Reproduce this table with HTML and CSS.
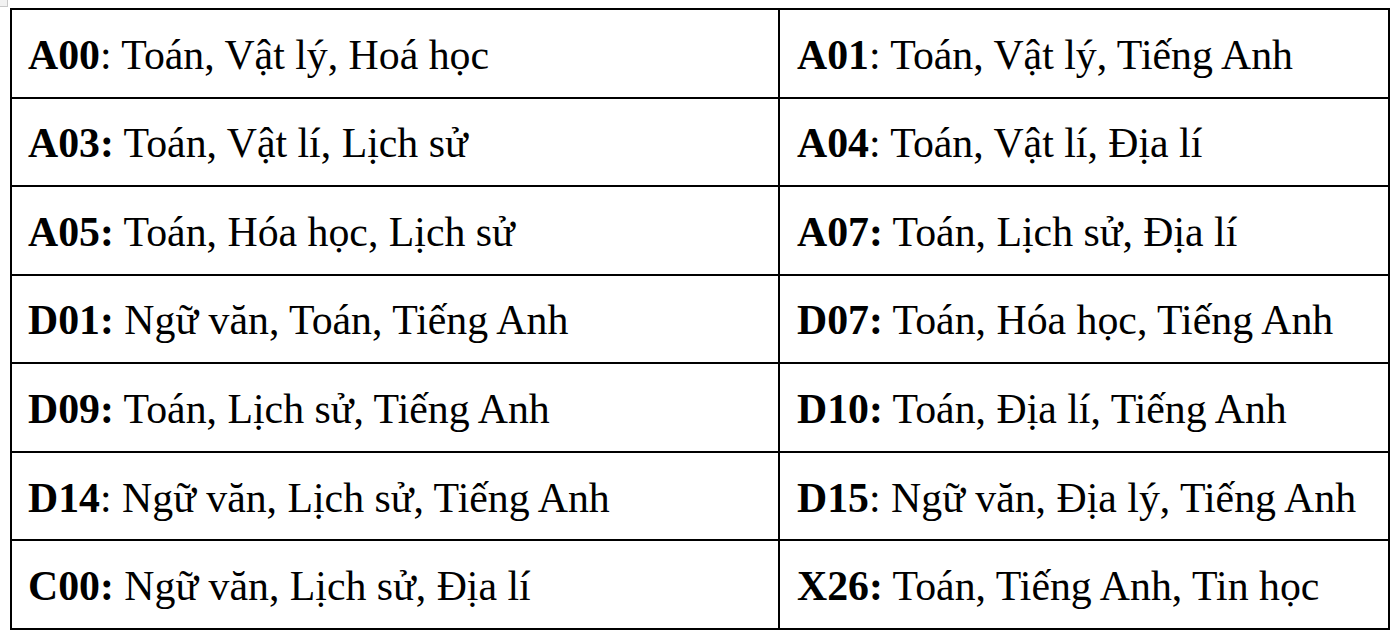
FILE: index.html
```html
<!DOCTYPE html>
<html lang="vi">
<head>
<meta charset="utf-8">
<title>Tổ hợp môn</title>
<link rel="stylesheet" href="styles.css">
</head>
<body>
<div class="corner-mark"></div>
<table class="combos">
  <tr>
    <td class="c1"><b>A00</b>: Toán, Vật lý, Hoá học</td>
    <td class="c2"><b>A01</b>: Toán, Vật lý, Tiếng Anh</td>
  </tr>
  <tr>
    <td class="c1"><b>A03:</b> Toán, Vật lí, Lịch sử</td>
    <td class="c2"><b>A04</b>: Toán, Vật lí, Địa lí</td>
  </tr>
  <tr>
    <td class="c1"><b>A05:</b> Toán, Hóa học, Lịch sử</td>
    <td class="c2"><b>A07:</b> Toán, Lịch sử, Địa lí</td>
  </tr>
  <tr>
    <td class="c1"><b>D01:</b> Ngữ văn, Toán, Tiếng Anh</td>
    <td class="c2"><b>D07:</b> Toán, Hóa học, Tiếng Anh</td>
  </tr>
  <tr>
    <td class="c1"><b>D09:</b> Toán, Lịch sử, Tiếng Anh</td>
    <td class="c2"><b>D10:</b> Toán, Địa lí, Tiếng Anh</td>
  </tr>
  <tr>
    <td class="c1"><b>D14</b>: Ngữ văn, Lịch sử, Tiếng Anh</td>
    <td class="c2"><b>D15</b>: Ngữ văn, Địa lý, Tiếng Anh</td>
  </tr>
  <tr>
    <td class="c1"><b>C00:</b> Ngữ văn, Lịch sử, Địa lí</td>
    <td class="c2"><b>X26:</b> Toán, Tiếng Anh, Tin học</td>
  </tr>
</table>
</body>
</html>
```
FILE: styles.css
```css
html, body {
  margin: 0;
  padding: 0;
  background: #ffffff;
}
body {
  padding: 8px 0 0 10px;
  font-family: "Liberation Serif", "Times New Roman", serif;
  color: #000000;
}
.corner-mark {
  position: absolute;
  left: 0;
  top: 0;
  width: 7px;
  height: 6px;
  background: #f2f2f2;
  border-right: 1px solid #c8c8c8;
  border-bottom: 1px solid #c8c8c8;
}
.combos {
  border-collapse: collapse;
  width: 1380px;
  height: 622px;
  table-layout: fixed;
}
.combos td {
  border: 2px solid #000000;
  font-size: 41.8px;
  line-height: 48px;
  vertical-align: middle;
  padding: 3px 0 0 16px;
  white-space: nowrap;
}
.combos td.c1 {
  width: 750px;
}
.combos td.c2 {
  padding-left: 17px;
}
.combos b {
  font-weight: bold;
}
```
